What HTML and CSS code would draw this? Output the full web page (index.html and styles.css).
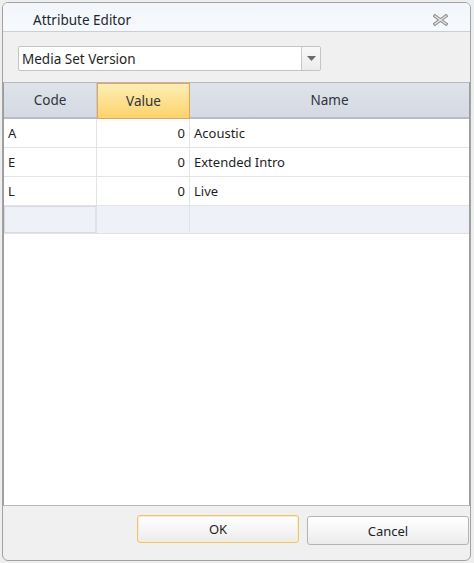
FILE: index.html
```html
<!DOCTYPE html>
<html>
<head>
<meta charset="utf-8">
<link rel="stylesheet" href="styles.css">
</head>
<body>
<div class="window">
  <div class="titlebar">
    <span class="title">Attribute Editor</span>
    <svg class="close" width="15" height="12" viewBox="0 0 15 12">
      <path d="M2 2 L13 10 M13 2 L2 10" stroke="#8c8c8c" stroke-width="3.4" stroke-linecap="square" fill="none"/>
      <path d="M2 2 L13 10 M13 2 L2 10" stroke="#e4e4e4" stroke-width="1.3" stroke-linecap="square" fill="none"/>
    </svg>
  </div>
  <div class="body">
    <div class="toolbar">
      <div class="combo">
        <span class="combo-text">Media Set Version</span>
        <span class="combo-btn"><svg width="9" height="5" viewBox="0 0 9 5"><path d="M0 0 H9 L4.5 5 Z" fill="#6a6a6a"/></svg></span>
      </div>
    </div>
    <div class="grid">
      <div class="row head">
        <div class="cell c1">Code</div>
        <div class="cell c2 sel">Value</div>
        <div class="cell c3">Name</div>
      </div>
      <div class="row">
        <div class="cell c1">A</div>
        <div class="cell c2 num">0</div>
        <div class="cell c3">Acoustic</div>
      </div>
      <div class="row">
        <div class="cell c1">E</div>
        <div class="cell c2 num">0</div>
        <div class="cell c3">Extended Intro</div>
      </div>
      <div class="row">
        <div class="cell c1">L</div>
        <div class="cell c2 num">0</div>
        <div class="cell c3">Live</div>
      </div>
      <div class="row newrow">
        <div class="cell c1 focus"></div>
        <div class="cell c2"></div>
        <div class="cell c3"></div>
      </div>
    </div>
    <div class="buttons">
      <button class="btn ok">OK</button>
      <button class="btn">Cancel</button>
    </div>
  </div>
</div>
</body>
</html>
```

FILE: styles.css
```css
html, body {
  margin: 0;
  padding: 0;
  background: #eeeeee;
  font-family: "Noto Sans", "Open Sans", sans-serif;
  font-size: 13px;
  color: #1e1e1e;
}
.window {
  box-sizing: border-box;
  margin: 2px 3px 2px 2px;
  height: 559px;
  border: 1px solid #a2a2a2;
  border-radius: 6px;
  background: #f0f0f0;
  display: flex;
  flex-direction: column;
  overflow: hidden;
}
.titlebar {
  box-sizing: border-box;
  height: 29px;
  flex: none;
  background: linear-gradient(#f2f6fa, #f7fafd);
  border-bottom: 1px solid #c9cfd6;
  display: flex;
  align-items: center;
  padding: 5px 0 0 30px;
}
.title {
  flex: 1;
  font-size: 13.5px;
  color: #1e2830;
}
.close {
  margin-right: 22px;
}
.body {
  flex: 1;
  display: flex;
  flex-direction: column;
}
.toolbar {
  height: 50px;
  flex: none;
  padding: 14px 0 0 15px;
  box-sizing: border-box;
}
.combo {
  box-sizing: border-box;
  width: 303px;
  height: 25px;
  background: #ffffff;
  border: 1px solid #c4c4c4;
  border-radius: 2px;
  display: flex;
  align-items: stretch;
}
.combo-text {
  flex: 1;
  padding-left: 3px;
  line-height: 24px;
  font-size: 13.5px;
}
.combo-btn {
  width: 18px;
  border-left: 1px solid #c9c9c9;
  background: linear-gradient(#f8f8f8, #ececec);
  display: flex;
  align-items: center;
  justify-content: center;
}
.grid {
  flex: 1;
  background: #ffffff;
  border-left: 1px solid #9c9c9c;
  border-right: 1px solid #9c9c9c;
  border-top: 1px solid #b8b8b8;
  border-bottom: 1px solid #b8b8b8;
  display: flex;
  flex-direction: column;
}
.row {
  display: flex;
  height: 29px;
  box-sizing: border-box;
  border-bottom: 1px solid #e1e4ea;
}
.cell {
  box-sizing: border-box;
  display: flex;
  align-items: center;
  padding: 0 4px;
  border-right: 1px solid #e1e4ea;
  font-size: 13px;
}
.c1 { width: 93px; }
.c2 { width: 93px; }
.c3 { flex: 1; border-right: none; }
.num { justify-content: flex-end; }
.head {
  height: 36px;
  background: linear-gradient(#dfe3ea, #d4d9e3);
  border-bottom: 2px solid #b7bcc6;
  color: #2e3440;
}
.head .cell {
  justify-content: center;
  border-right: 1px solid #c5cad3;
  font-size: 13.5px;
}
.head .c3 { border-right: none; }
.head .sel {
  background: linear-gradient(#fdeeb5, #fde090 50%, #fcd36a);
  border: 1px solid #e3a55d;
  margin-bottom: -2px;
}
.newrow {
  background: #eef1f8;
  height: 28px;
  border-bottom: 1px solid #dfe2e9;
}
.newrow .cell { border-right: 1px solid #dfe2e9; }
.newrow .c3 { border-right: none; }
.newrow .focus {
  border: 1px solid #d6d9e0;
  border-right: 2px solid #dfe2e9;
}
.buttons {
  height: 54px;
  flex: none;
  display: flex;
  justify-content: flex-end;
  align-items: flex-start;
  padding: 9px 1px 0 0;
  box-sizing: border-box;
  gap: 8px;
}
.btn {
  box-sizing: border-box;
  width: 162px;
  height: 29px;
  border: 1px solid #b4b4b4;
  border-radius: 3px;
  background: linear-gradient(#ffffff, #f4f4f4 60%, #ebebeb);
  font-family: "Noto Sans", "Open Sans", sans-serif;
  font-size: 13px;
  color: #1e1e1e;
  padding: 0;
  margin: 0;
}
.btn.ok {
  border: 1px solid #e9c670;
  box-shadow: inset 0 0 0 1px #fbecc4;
  height: 28px;
}
.btn:last-child { margin-top: 1px; }
```
